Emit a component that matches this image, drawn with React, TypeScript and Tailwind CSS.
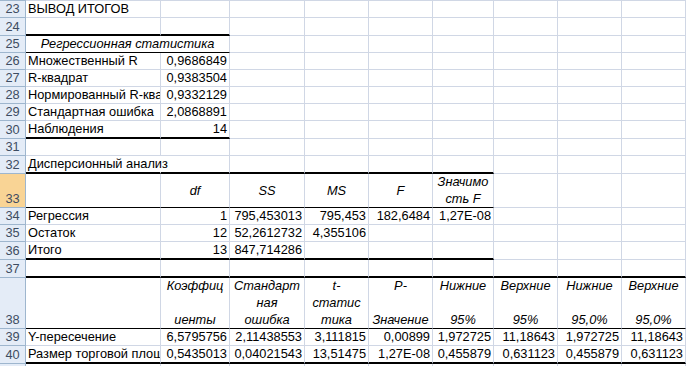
import type { ReactNode } from 'react';

// сетка колонок: заголовок строк, A..I и хвост J
const COLS =
  'grid grid-cols-[26px_135px_69px_75px_64px_64px_61px_64px_64px_64px_1fr]';

type Bot = 'g' | 'n' | 't' | 'T';

const BOT: Record<Bot, string> = {
  g: 'border-b border-b-[#d0d7e5]',
  n: 'border-b border-b-white',
  t: 'border-b border-b-black',
  T: 'border-b-2 border-b-black',
};

const RIGHT = {
  g: 'border-r border-r-[#d0d7e5]',
  n: 'border-r border-r-white',
};

const ALIGN = {
  l: 'justify-start',
  r: 'justify-end',
  c: 'justify-center',
};

type CellProps = {
  children?: ReactNode;
  b?: Bot;
  r?: 'g' | 'n';
  a?: 'l' | 'r' | 'c';
  i?: boolean;
  span?: boolean;
  clip?: boolean;
  lines?: string[];
  mid?: boolean;
};

function C({ children, b = 'g', r = 'g', a = 'l', i = false, span = false, clip = true, lines, mid = false }: CellProps) {
  const cls = [
    'flex px-[2px] whitespace-nowrap leading-[16px]',
    mid ? 'items-center' : 'items-end',
    BOT[b],
    RIGHT[r],
    ALIGN[a],
    i ? 'italic' : '',
    span ? 'col-span-2' : '',
    clip ? 'overflow-hidden' : 'overflow-visible relative z-10',
  ].join(' ');

  if (lines) {
    return (
      <div className={cls}>
        <div className="flex h-full w-full flex-col items-center justify-between italic">
          {lines.map((l) => (
            <span key={l}>{l}</span>
          ))}
        </div>
      </div>
    );
  }
  return <div className={cls}>{children}</div>;
}

function empties(k: number, b: Bot = 'g') {
  return Array.from({ length: k }, (_, n) => <C key={'e' + n} b={b} />);
}

function Row({ n, h, sel = false, children }: { n: number; h: string; sel?: boolean; children: ReactNode }) {
  return (
    <div className={`${COLS} ${h}`}>
      <div
        className={`flex items-end justify-center border-r border-b border-[#9eb6ce] leading-[16px] text-[#3e4c61] ${
          sel ? 'bg-[#f9d495]' : 'bg-[#e4ecf7]'
        }`}
      >
        {n}
      </div>
      {children}
    </div>
  );
}

const coef = [
  ['Y-пересечение', '6,5795756', '2,11438553', '3,111815', '0,00899', '1,972725', '11,18643', '1,972725', '11,18643'],
  ['Размер торговой площади', '0,5435013', '0,04021543', '13,51475', '1,27E-08', '0,455879', '0,631123', '0,455879', '0,631123'],
];

export default function App() {
  return (
    <div className="h-[366px] w-[686px] overflow-hidden bg-white font-['Liberation_Sans',Arial,sans-serif] text-[12.8px] text-black">
      {/* линия над строкой 23 */}
      <div className={`${COLS} h-px`}>
        <div className="bg-[#9eb6ce]" />
        <div className="col-span-10 bg-[#d0d7e5]" />
      </div>

      <Row n={23} h="h-[17px]">
        <C>ВЫВОД ИТОГОВ</C>
        {empties(9)}
      </Row>
      <Row n={24} h="h-[18px]">
        <C b="T" />
        <C b="T" />
        {empties(7)}
      </Row>

      {/* Регрессионная статистика */}
      <Row n={25} h="h-[17px]">
        <C span b="t" a="c" i>
          Регрессионная статистика
        </C>
        {empties(8)}
      </Row>
      <Row n={26} h="h-[17px]">
        <C>Множественный R</C>
        <C a="r">0,9686849</C>
        {empties(8)}
      </Row>
      <Row n={27} h="h-[17px]">
        <C>R-квадрат</C>
        <C a="r">0,9383504</C>
        {empties(8)}
      </Row>
      <Row n={28} h="h-[17px]">
        <C>Нормированный R-квадрат</C>
        <C a="r">0,9332129</C>
        {empties(8)}
      </Row>
      <Row n={29} h="h-[17px]">
        <C>Стандартная ошибка</C>
        <C a="r">2,0868891</C>
        {empties(8)}
      </Row>
      <Row n={30} h="h-[18px]">
        <C b="T">Наблюдения</C>
        <C b="T" a="r">
          14
        </C>
        {empties(8)}
      </Row>
      <Row n={31} h="h-[17px]">
        {empties(10)}
      </Row>

      {/* Дисперсионный анализ */}
      <Row n={32} h="h-[18px]">
        <C b="T" r="n" clip={false}>
          Дисперсионный анализ
        </C>
        {empties(5, 'T')}
        {empties(4)}
      </Row>
      <Row n={33} h="h-[34px]" sel>
        <C b="t" />
        <C b="t" a="c" i mid>df</C>
        <C b="t" a="c" i mid>SS</C>
        <C b="t" a="c" i mid>MS</C>
        <C b="t" a="c" i mid>F</C>
        <C b="t" lines={['Значимо', 'сть F']} />
        {empties(4)}
      </Row>
      <Row n={34} h="h-[17px]">
        <C>Регрессия</C>
        <C a="r">1</C>
        <C a="r">795,453013</C>
        <C a="r">795,453</C>
        <C a="r">182,6484</C>
        <C a="r">1,27E-08</C>
        {empties(4)}
      </Row>
      <Row n={35} h="h-[17px]">
        <C>Остаток</C>
        <C a="r">12</C>
        <C a="r">52,2612732</C>
        <C a="r">4,355106</C>
        {empties(6)}
      </Row>
      <Row n={36} h="h-[18px]">
        <C b="T">Итого</C>
        <C b="T" a="r">13</C>
        <C b="T" a="r">847,714286</C>
        {empties(3, 'T')}
        {empties(4)}
      </Row>
      <Row n={37} h="h-[18px]">
        {empties(10, 'T')}
      </Row>

      {/* Коэффициенты */}
      <Row n={38} h="h-[51px]">
        <C b="t" />
        <C b="t" lines={['Коэффиц', 'иенты']} />
        <C b="t" lines={['Стандарт', 'ная', 'ошибка']} />
        <C b="t" lines={['t-', 'статис', 'тика']} />
        <C b="t" lines={['P-', 'Значение']} />
        <C b="t" lines={['Нижние', '95%']} />
        <C b="t" lines={['Верхние', '95%']} />
        <C b="t" lines={['Нижние', '95,0%']} />
        <C b="t" lines={['Верхние', '95,0%']} />
        <C b="t" />
      </Row>
      {coef.map((row, k) => {
        const b: Bot = k === 1 ? 'T' : 'g';
        return (
          <Row key={row[0]} n={39 + k} h={k === 1 ? 'h-[18px]' : 'h-[17px]'}>
            <C b={b}>{row[0]}</C>
            {row.slice(1).map((v, j) => (
              <C key={j} b={b} a="r">
                {v}
              </C>
            ))}
            <C b={b} />
          </Row>
        );
      })}
      <Row n={41} h="h-[17px]">
        {empties(10)}
      </Row>
    </div>
  );
}
